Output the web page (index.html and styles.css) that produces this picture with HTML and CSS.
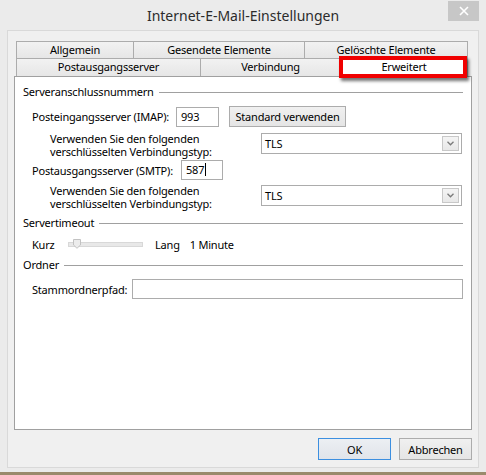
FILE: index.html
```html
<!DOCTYPE html>
<html lang="de">
<head>
    <meta charset="UTF-8">
    <meta name="viewport" content="width=device-width, initial-scale=1.0">
    <title>Internet-E-Mail-Einstellungen</title>
    <link rel="stylesheet" href="styles.css">
</head>
<body>
    <div class="window">
        <div class="titlebar">
            <span class="title">Internet-E-Mail-Einstellungen</span>
            <span class="close-btn">
                <svg width="10" height="10" viewBox="0 0 10 10"><path d="M1 1L9 9M9 1L1 9" stroke="#fff" stroke-width="1.6"/></svg>
            </span>
        </div>
        <div class="client">
            <div class="tabs">
                <div class="tab-row">
                    <div class="tab tab-allgemein">Allgemein</div>
                    <div class="tab tab-gesendet">Gesendete Elemente</div>
                    <div class="tab tab-geloescht">Gelöschte Elemente</div>
                </div>
                <div class="tab-row row-front">
                    <div class="tab tab-postausgang">Postausgangsserver</div>
                    <div class="tab tab-verbindung">Verbindung</div>
                    <div class="tab tab-erweitert active">Erweitert</div>
                </div>
                <div class="highlight"></div>
            </div>

            <div class="panel">
                <div class="group-title">Serveranschlussnummern</div>

                <div class="row row-imap">
                    <label class="lbl lbl-imap">Posteingangsserver (IMAP):</label>
                    <div class="textbox port-imap">993</div>
                    <button class="btn btn-std">Standard verwenden</button>
                </div>
                <div class="row row-enc">
                    <div class="enc-text">
                        <div class="enc-line">Verwenden Sie den folgenden</div>
                        <div class="enc-line">verschlüsselten Verbindungstyp:</div>
                    </div>
                    <div class="dropdown">
                        <span>TLS</span>
                        <span class="dd-arrow"><svg width="7" height="5" viewBox="0 0 7 5"><path d="M0.5 0.8L3.5 3.8L6.5 0.8" fill="none" stroke="#7a7a7a" stroke-width="1.3"/></svg></span>
                    </div>
                </div>

                <div class="row row-smtp">
                    <label class="lbl lbl-smtp">Postausgangsserver (SMTP):</label>
                    <div class="textbox port-smtp">587<span class="caret"></span></div>
                </div>
                <div class="row row-enc row-enc2">
                    <div class="enc-text">
                        <div class="enc-line">Verwenden Sie den folgenden</div>
                        <div class="enc-line">verschlüsselten Verbindungstyp:</div>
                    </div>
                    <div class="dropdown">
                        <span>TLS</span>
                        <span class="dd-arrow"><svg width="7" height="5" viewBox="0 0 7 5"><path d="M0.5 0.8L3.5 3.8L6.5 0.8" fill="none" stroke="#7a7a7a" stroke-width="1.3"/></svg></span>
                    </div>
                </div>

                <div class="group-title gt-timeout">Servertimeout</div>
                <div class="row row-slider">
                    <span class="lbl-kurz">Kurz</span>
                    <div class="slider">
                        <div class="track"></div>
                        <svg class="thumb" width="8" height="10" viewBox="0 0 8 10"><path d="M0.5 0.5H7.5V6L4 9.3L0.5 6Z" fill="#ececec" stroke="#c2c2c2"/></svg>
                    </div>
                    <span class="lbl-lang">Lang</span>
                    <span class="lbl-min">1 Minute</span>
                </div>

                <div class="group-title gt-ordner">Ordner</div>
                <div class="row row-path">
                    <label class="lbl lbl-path">Stammordnerpfad:</label>
                    <div class="textbox path-box"></div>
                </div>
            </div>

            <div class="buttons">
                <button class="btn dlg-btn default">OK</button>
                <button class="btn dlg-btn">Abbrechen</button>
            </div>
        </div>
    </div>
</body>
</html>
```

FILE: styles.css
```css
body {
    margin: 0;
    width: 486px;
    height: 475px;
    overflow: hidden;
    background-color: #9a8a6c;
    font-family: 'Noto Sans', 'Open Sans', sans-serif;
    font-size: 11px;
    letter-spacing: -0.2px;
    color: #000;
}
.window {
    height: 472px;
    background-color: #ebebeb;
}
.titlebar {
    position: relative;
    height: 30px;
    display: flex;
    align-items: center;
    justify-content: center;
}
.title {
    font-size: 14px;
    letter-spacing: 0;
    color: #2b2b2b;
    margin-top: 1px;
}
.close-btn {
    position: absolute;
    top: 1px;
    right: 7px;
    width: 31px;
    height: 20px;
    background-color: #c7c7c7;
    display: flex;
    align-items: center;
    justify-content: center;
}
.client {
    margin: 0 7px;
    height: 426px;
    border: 1px solid #d9d9d9;
    background-color: #f0f0f0;
    padding: 10px 6px 0 6px;
}

/* tabs */
.tabs {
    position: relative;
    margin: 0 3px 0 2px;
}
.tab-row {
    display: flex;
}
.tab {
    box-sizing: border-box;
    height: 17px;
    border: 1px solid #acacac;
    border-left: none;
    border-bottom: none;
    background: linear-gradient(#f2f2f2, #e6e6e6);
    text-align: center;
    line-height: 15px;
    white-space: nowrap;
}
.row-front .tab {
    height: 18px;
    line-height: 16px;
}
.tab-allgemein, .tab-postausgang {
    border-left: 1px solid #acacac;
}
.tab-allgemein { width: 118px; }
.tab-gesendet { width: 171px; }
.tab-geloescht { width: 163px; }
.tab-postausgang { width: 185px; }
.tab-verbindung { width: 140px; }
.tab-erweitert { width: 127px; }
.tab.active {
    background: #fff;
}
.highlight {
    position: absolute;
    left: 323px;
    top: 15px;
    width: 128px;
    height: 22px;
    box-sizing: border-box;
    border: 4px solid #f00000;
    box-shadow: 2px 3px 3px rgba(0,0,0,0.55);
}

/* panel */
.panel {
    box-sizing: border-box;
    height: 354px;
    border: 1px solid #a0a0a0;
    background-color: #fff;
    padding: 7px 8px 0 8px;
}
.group-title {
    display: flex;
    align-items: center;
    gap: 5px;
    height: 16px;
    line-height: 16px;
    white-space: nowrap;
}
.group-title::after {
    content: "";
    flex: 1;
    height: 1px;
    background-color: #a0a0a0;
}
.row {
    display: flex;
    align-items: center;
    padding-left: 9px;
}
.lbl {
    white-space: nowrap;
}
.lbl-imap { width: 144px; }
.lbl-smtp { width: 149px; }
.lbl-path { width: 100px; }
.textbox {
    box-sizing: border-box;
    height: 20px;
    border: 1px solid #acacac;
    background-color: #fff;
    padding-left: 4px;
    line-height: 18px;
}
.port-imap { width: 43px; }
.port-smtp { width: 42px; }
.caret {
    display: inline-block;
    width: 1px;
    height: 13px;
    background-color: #000;
    vertical-align: -2px;
    margin-left: 1px;
}
.btn {
    box-sizing: border-box;
    font-family: inherit;
    font-size: 11px;
    letter-spacing: -0.2px;
    color: #000;
    border: 1px solid #acacac;
    background: linear-gradient(#f0f0f0, #e5e5e5);
    padding: 0;
    margin: 0;
}
.btn-std {
    width: 117px;
    height: 21px;
    margin-left: 10px;
}
.row-imap {
    margin-top: 6px;
    height: 21px;
}
.row-enc {
    align-items: flex-start;
    margin-top: 5px;
    padding-left: 27px;
    height: 26px;
}
.enc-text {
    width: 211px;
    white-space: nowrap;
}
.enc-line {
    height: 13px;
    line-height: 13px;
}
.dropdown {
    box-sizing: border-box;
    margin-top: 1px;
    width: 201px;
    height: 21px;
    border: 1px solid #acacac;
    background-color: #fff;
    display: flex;
    align-items: center;
    justify-content: space-between;
    padding: 0 2px 0 3px;
}
.dd-arrow {
    box-sizing: border-box;
    width: 17px;
    height: 15px;
    border: 1px solid #c8c8c8;
    background: linear-gradient(#f4f4f4, #e8e8e8);
    display: flex;
    align-items: center;
    justify-content: center;
}
.row-smtp {
    margin-top: 2px;
    height: 20px;
}
.row-enc2 {
    margin-top: 4px;
}
.gt-timeout {
    margin-top: 5px;
}
.row-slider {
    margin-top: 5px;
    height: 16px;
}
.lbl-kurz {
    width: 36px;
}
.slider {
    position: relative;
    width: 75px;
    height: 16px;
}
.track {
    position: absolute;
    left: 0;
    right: 0;
    top: 6px;
    height: 3px;
    border: 1px solid #d8d8d8;
    background-color: #e8e8e8;
}
.thumb {
    position: absolute;
    left: 5px;
    top: 3px;
}
.lbl-lang {
    margin-left: 12px;
}
.lbl-min {
    margin-left: 10px;
}
.gt-ordner {
    margin-top: 5px;
}
.row-path {
    margin-top: 6px;
    height: 20px;
}
.path-box {
    flex: 1;
}

/* dialog buttons */
.buttons {
    display: flex;
    justify-content: flex-end;
    gap: 8px;
    margin-top: 8px;
}
.dlg-btn {
    width: 73px;
    height: 22px;
}
.dlg-btn.default {
    border-color: #3c8fe0;
    background: linear-gradient(#eceff3, #e0e4ea);
}
```
